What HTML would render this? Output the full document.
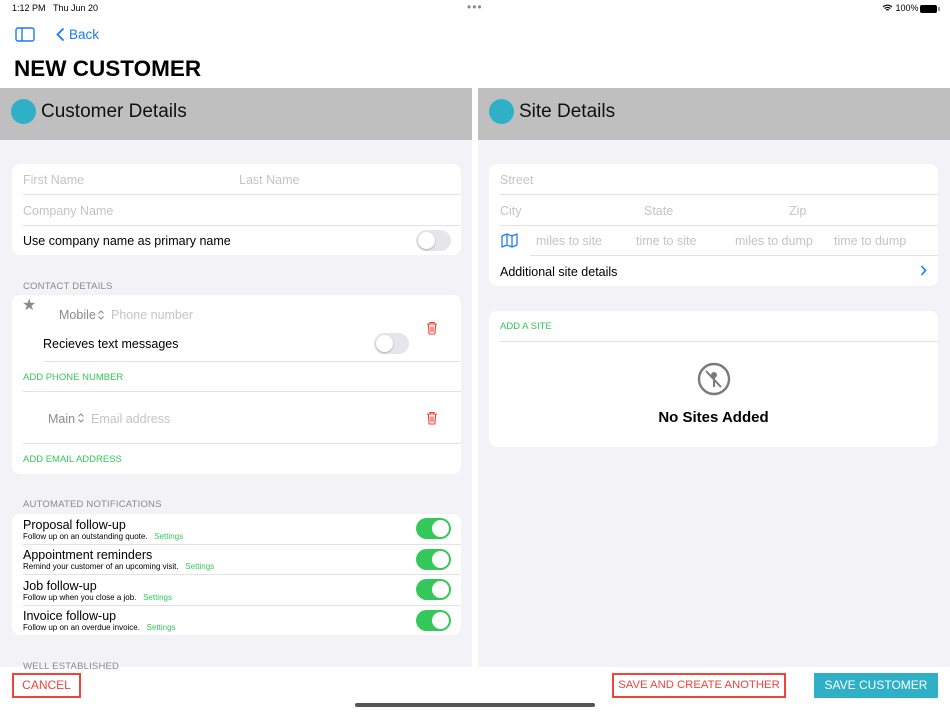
<!DOCTYPE html>
<html><head><meta charset="utf-8"><style>
*{box-sizing:border-box;margin:0;padding:0}
body{width:950px;height:712px;position:relative;overflow:hidden;background:#fff;font-family:"Liberation Sans",sans-serif;color:#000}
.a{position:absolute;white-space:nowrap}
.card{position:absolute;background:#fff;border-radius:8px}
.ph{color:#c4c4c8;font-size:12.5px}
.line{position:absolute;height:1px;background:#e2e2e6}
.hdr{font-size:9.5px;color:#8a8a8e;letter-spacing:.2px}
.green{color:#34c759}
.tog{position:absolute;width:35px;height:21px;border-radius:11px;background:#34c759}
.tog::after{content:"";position:absolute;right:2px;top:2px;width:17px;height:17px;border-radius:50%;background:#fff}
.off{background:#e6e6ea}
.off::after{left:2px;right:auto;box-shadow:0 1px 2px rgba(0,0,0,.25)}
.sub{font-size:8px}
</style></head><body>
<div class="a" style="left:12px;top:3px;font-size:9px">1:12 PM&nbsp;&nbsp;&nbsp;Thu Jun 20</div>
<div class="a" style="left:467px;top:0;font-size:12px;color:#888;letter-spacing:1px">•••</div>
<div class="a" style="left:882px;top:3px;font-size:9px">
<svg width="11" height="8" viewBox="0 0 11 8" style="vertical-align:-1px"><path d="M1 3a6.5 6.5 0 0 1 9 0M2.6 4.6a4.2 4.2 0 0 1 5.8 0M4.2 6.2a2 2 0 0 1 2.6 0" stroke="#000" stroke-width="1.2" fill="none"/></svg> 100%</div>
<div class="a" style="left:920px;top:5px;width:17px;height:8px;border-radius:2px;background:#000"></div>
<div class="a" style="left:938px;top:7px;width:1.5px;height:4px;background:#999"></div>
<svg class="a" style="left:15px;top:27px" width="20" height="15" viewBox="0 0 20 15"><rect x="1" y="1" width="18" height="13" rx="2" fill="none" stroke="#1a7cf5" stroke-width="1.4"/><line x1="7" y1="1" x2="7" y2="14" stroke="#1a7cf5" stroke-width="1.4"/></svg>
<svg class="a" style="left:56px;top:27px" width="9" height="15" viewBox="0 0 9 15"><path d="M7.5 1.5 1.5 7.5l6 6" stroke="#1a7cf5" stroke-width="1.8" fill="none"/></svg>
<div class="a" style="left:69px;top:27px;font-size:13.5px;color:#1a7cf5">Back</div>
<div class="a" style="left:14px;top:56px;font-size:22.5px;font-weight:bold">NEW CUSTOMER</div>

<div class="a" style="left:0;top:88px;width:472px;height:52px;background:#bfbfbf"></div>
<div class="a" style="left:478px;top:88px;width:472px;height:52px;background:#bfbfbf"></div>
<div class="a" style="left:0;top:140px;width:472px;height:527px;background:#f2f2f7"></div>
<div class="a" style="left:478px;top:140px;width:472px;height:527px;background:#f2f2f7"></div>
<div class="a" style="left:11px;top:99px;width:25px;height:25px;border-radius:50%;background:#2fb0c7"></div>
<div class="a" style="left:41px;top:101px;font-size:19px;color:#111">Customer Details</div>
<div class="a" style="left:489px;top:99px;width:25px;height:25px;border-radius:50%;background:#2fb0c7"></div>
<div class="a" style="left:519px;top:101px;font-size:19px;color:#111">Site Details</div>

<div class="card" style="left:12px;top:164px;width:449px;height:91px"></div>
<div class="a ph" style="left:23px;top:173px">First Name</div>
<div class="a ph" style="left:239px;top:173px">Last Name</div>
<div class="line" style="left:23px;top:194px;width:438px"></div>
<div class="a ph" style="left:23px;top:204px">Company Name</div>
<div class="line" style="left:23px;top:225px;width:438px"></div>
<div class="a" style="left:23px;top:234px;font-size:12.5px">Use company name as primary name</div>
<div class="tog off" style="left:416px;top:230px"></div>

<div class="a hdr" style="left:23px;top:281px">CONTACT DETAILS</div>
<div class="card" style="left:12px;top:295px;width:449px;height:179px"></div>
<div class="a" style="left:22px;top:295px;font-size:16px;color:#8a8a8e">★</div>
<div class="a" style="left:59px;top:308px;font-size:12.5px;color:#8a8a8e">Mobile</div>
<svg class="a" style="left:97px;top:309px" width="8" height="12" viewBox="0 0 8 12"><path d="M1.5 4.5 4 2l2.5 2.5M1.5 7.5 4 10l2.5-2.5" stroke="#8a8a8e" stroke-width="1.1" fill="none"/></svg>
<div class="a ph" style="left:111px;top:308px">Phone number</div>
<div class="a" style="left:43px;top:337px;font-size:12.5px">Recieves text messages</div>
<div class="tog off" style="left:374px;top:333px"></div>
<svg class="a" style="left:426px;top:321px" width="12" height="14" viewBox="0 0 12 14"><path d="M1 3h10M4 3V1.5h4V3M2.3 3l.8 10h5.8l.8-10M5 5.5v5.5M7 5.5v5.5" stroke="#ff3b30" stroke-width="1.1" fill="none"/></svg>
<div class="line" style="left:43px;top:361px;width:418px"></div>
<div class="a green" style="left:23px;top:372px;font-size:9.5px">ADD PHONE NUMBER</div>
<div class="line" style="left:23px;top:391px;width:438px"></div>
<div class="a" style="left:48px;top:412px;font-size:12.5px;color:#8a8a8e">Main</div>
<svg class="a" style="left:77px;top:412px" width="8" height="12" viewBox="0 0 8 12"><path d="M1.5 4.5 4 2l2.5 2.5M1.5 7.5 4 10l2.5-2.5" stroke="#8a8a8e" stroke-width="1.1" fill="none"/></svg>
<div class="a ph" style="left:91px;top:412px">Email address</div>
<svg class="a" style="left:426px;top:411px" width="12" height="14" viewBox="0 0 12 14"><path d="M1 3h10M4 3V1.5h4V3M2.3 3l.8 10h5.8l.8-10M5 5.5v5.5M7 5.5v5.5" stroke="#ff3b30" stroke-width="1.1" fill="none"/></svg>
<div class="line" style="left:23px;top:443px;width:438px"></div>
<div class="a green" style="left:23px;top:454px;font-size:9.5px">ADD EMAIL ADDRESS</div>

<div class="a hdr" style="left:23px;top:499px">AUTOMATED NOTIFICATIONS</div>
<div class="card" style="left:12px;top:514px;width:449px;height:121px"></div>
<div class="a" style="left:23px;top:518px;font-size:12.5px">Proposal follow-up</div>
<div class="a sub" style="left:23px;top:532px">Follow up on an outstanding quote.&nbsp;&nbsp;&nbsp;<span class="green">Settings</span></div>
<div class="tog" style="left:416px;top:518px"></div>
<div class="line" style="left:23px;top:544px;width:438px"></div>
<div class="a" style="left:23px;top:548px;font-size:12.5px">Appointment reminders</div>
<div class="a sub" style="left:23px;top:562px">Remind your customer of an upcoming visit.&nbsp;&nbsp;&nbsp;<span class="green">Settings</span></div>
<div class="tog" style="left:416px;top:549px"></div>
<div class="line" style="left:23px;top:574px;width:438px"></div>
<div class="a" style="left:23px;top:579px;font-size:12.5px">Job follow-up</div>
<div class="a sub" style="left:23px;top:593px">Follow up when you close a job.&nbsp;&nbsp;&nbsp;<span class="green">Settings</span></div>
<div class="tog" style="left:416px;top:579px"></div>
<div class="line" style="left:23px;top:605px;width:438px"></div>
<div class="a" style="left:23px;top:609px;font-size:12.5px">Invoice follow-up</div>
<div class="a sub" style="left:23px;top:623px">Follow up on an overdue invoice.&nbsp;&nbsp;&nbsp;<span class="green">Settings</span></div>
<div class="tog" style="left:416px;top:610px"></div>
<div class="a hdr" style="left:23px;top:661px">WELL ESTABLISHED</div>

<div class="card" style="left:489px;top:164px;width:449px;height:122px"></div>
<div class="a ph" style="left:500px;top:173px">Street</div>
<div class="line" style="left:500px;top:194px;width:438px"></div>
<div class="a ph" style="left:500px;top:204px">City</div>
<div class="a ph" style="left:644px;top:204px">State</div>
<div class="a ph" style="left:789px;top:204px">Zip</div>
<div class="line" style="left:500px;top:225px;width:438px"></div>
<svg class="a" style="left:501px;top:233px" width="17" height="15" viewBox="0 0 17 15"><path d="M1 3l5-2 5 2 5-2v11l-5 2-5-2-5 2zM6 1v11M11 3v11" stroke="#1a7cf5" stroke-width="1.3" fill="none" stroke-linejoin="round"/></svg>
<div class="a ph" style="left:536px;top:234px">miles to site</div>
<div class="a ph" style="left:636px;top:234px">time to site</div>
<div class="a ph" style="left:735px;top:234px">miles to dump</div>
<div class="a ph" style="left:834px;top:234px">time to dump</div>
<div class="line" style="left:530px;top:255px;width:408px"></div>
<div class="a" style="left:500px;top:265px;font-size:12.5px">Additional site details</div>
<svg class="a" style="left:920px;top:265px" width="7" height="11" viewBox="0 0 7 11"><path d="M1.5 1l4 4.5-4 4.5" stroke="#1a7cf5" stroke-width="1.6" fill="none"/></svg>

<div class="card" style="left:489px;top:311px;width:449px;height:136px"></div>
<div class="a green" style="left:500px;top:321px;font-size:9.5px">ADD A SITE</div>
<div class="line" style="left:500px;top:341px;width:438px"></div>
<svg class="a" style="left:697px;top:362px" width="34" height="34" viewBox="0 0 34 34"><circle cx="17" cy="17" r="15" stroke="#7a7a7a" stroke-width="2.4" fill="none"/><circle cx="17" cy="13" r="3" fill="#7a7a7a"/><path d="M17 13v12M9 9l15 16" stroke="#7a7a7a" stroke-width="2"/></svg>
<div class="a" style="left:489px;top:409px;width:449px;text-align:center;font-size:15px;font-weight:bold">No Sites Added</div>

<div class="a" style="left:12px;top:673px;width:69px;height:25px;border:2px solid #f0443a;color:#f0443a;font-size:12px;text-align:center;line-height:21px">CANCEL</div>
<div class="a" style="left:612px;top:673px;width:174px;height:25px;border:2px solid #f0443a;color:#f0443a;font-size:11.3px;text-align:center;line-height:21px">SAVE AND CREATE ANOTHER</div>
<div class="a" style="left:814px;top:673px;width:124px;height:25px;background:#2fb0c7;color:#fff;font-size:12px;text-align:center;line-height:25px">SAVE CUSTOMER</div>
<div class="a" style="left:355px;top:703px;width:240px;height:4px;border-radius:2px;background:#555"></div>
</body></html>
